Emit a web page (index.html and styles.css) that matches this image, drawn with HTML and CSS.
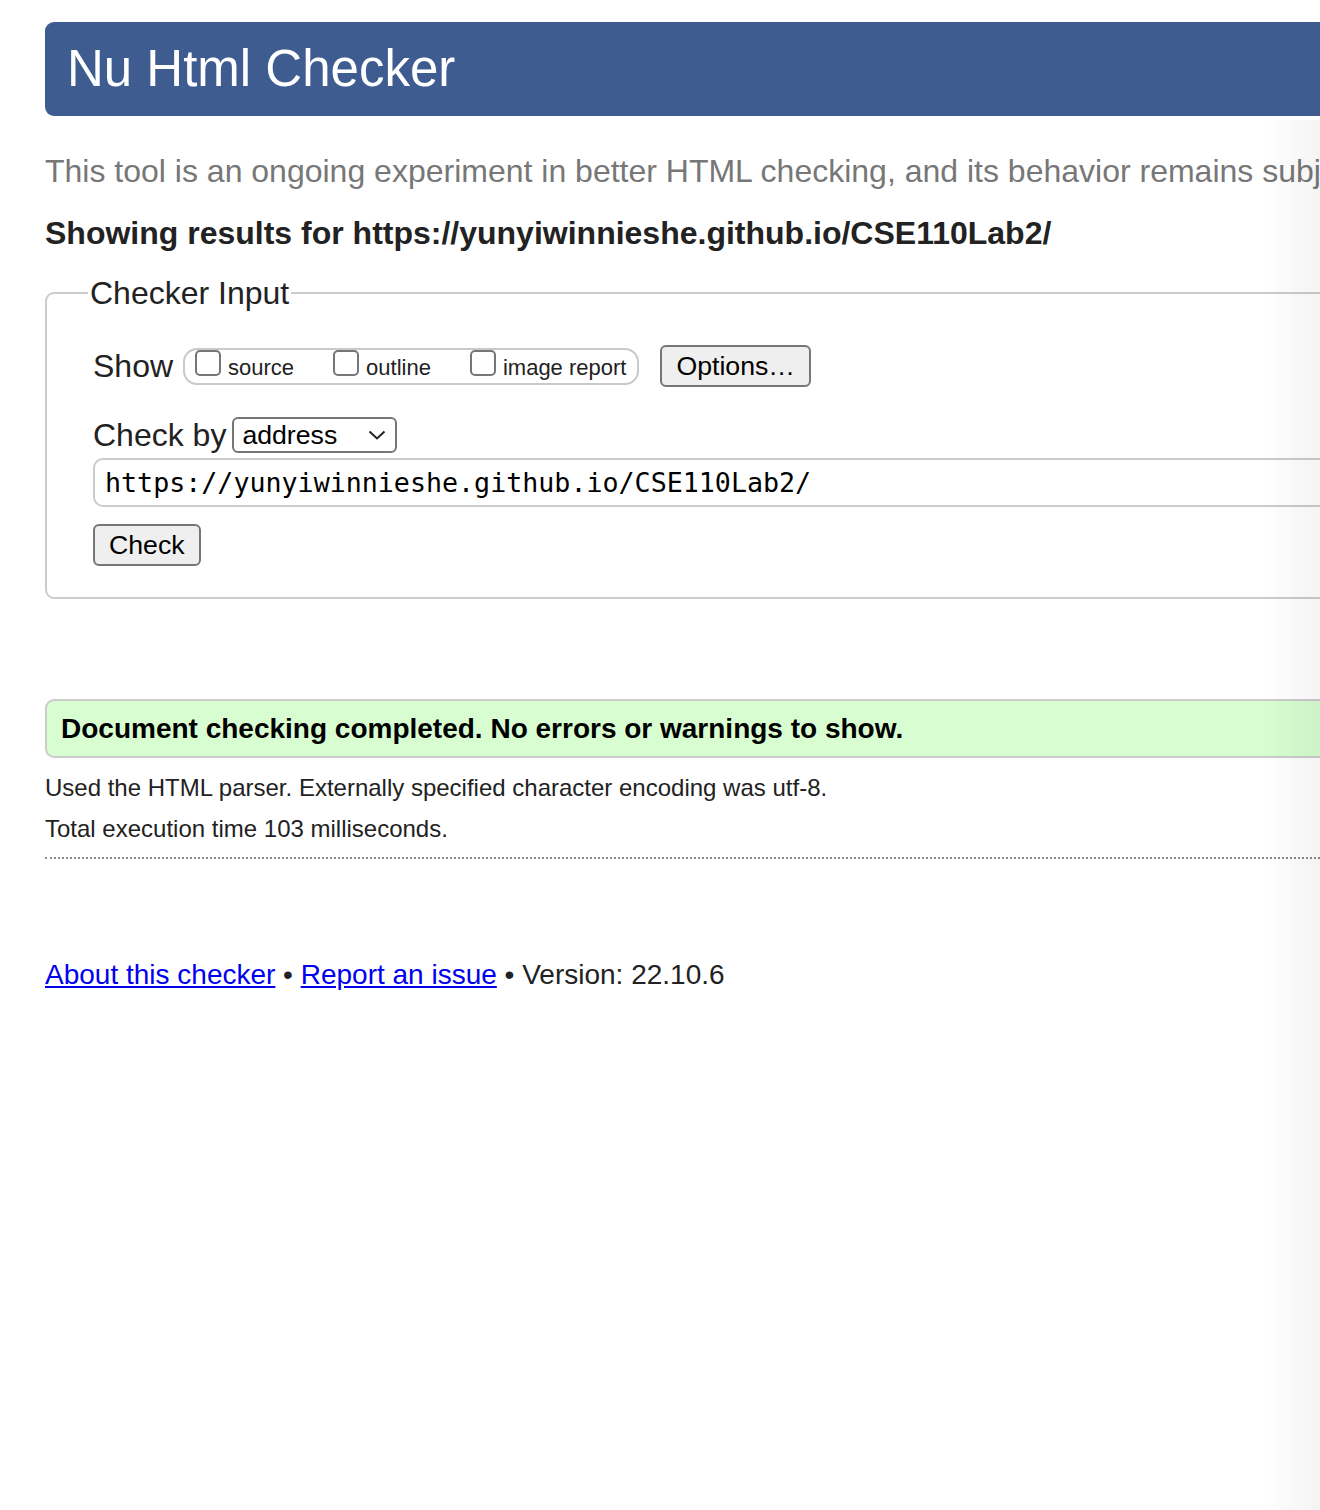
FILE: index.html
```html
<!DOCTYPE html>
<html lang="en">
<head>
<meta charset="utf-8">
<title>Nu Html Checker</title>
<link rel="stylesheet" href="styles.css">
</head>
<body>
<div class="page">
  <h1 class="title">Nu Html Checker</h1>
  <p class="intro">This tool is an ongoing experiment in better HTML checking, and its behavior remains subject to change</p>
  <p class="showing">Showing results for https://yunyiwinnieshe.github.io/CSE110Lab2/</p>
  <form class="checker">
    <fieldset class="checker-input">
      <legend>Checker Input</legend>
      <div class="fields">
        <div class="row show-row">
          <span class="row-label">Show</span>
          <span class="show-options">
            <label class="opt"><input type="checkbox"><span>source</span></label>
            <label class="opt"><input type="checkbox"><span>outline</span></label>
            <label class="opt"><input type="checkbox"><span>image report</span></label>
          </span>
          <button type="button" class="btn btn-options">Options…</button>
        </div>
        <div class="row by-row">
          <span class="row-label">Check by</span>
          <span class="select"><span>address</span><svg class="chev" width="18" height="10" viewBox="0 0 18 10"><path d="M1.5 1.5 L9 8.5 L16.5 1.5" fill="none" stroke="#222" stroke-width="2"/></svg></span>
        </div>
        <input class="url" type="text" value="https://yunyiwinnieshe.github.io/CSE110Lab2/">
        <button type="button" class="btn btn-check">Check</button>
      </div>
    </fieldset>
  </form>
  <p class="success">Document checking completed. No errors or warnings to show.</p>
  <p class="details first">Used the HTML parser. Externally specified character encoding was utf-8.</p>
  <p class="details">Total execution time 103 milliseconds.</p>
  <hr class="sep">
  <p class="footer"><a href="#">About this checker</a> • <a href="#">Report an issue</a> • Version: 22.10.6</p>
</div>
<div class="edge-shade"></div>
</body>
</html>
```

FILE: styles.css
```css
html, body {
  margin: 0;
  padding: 0;
  overflow: hidden;
  background: #fff;
}

body {
  font-family: "Liberation Sans", Arial, Helvetica, sans-serif;
  color: #222;
}

.page {
  width: 1760px;
  box-sizing: border-box;
  padding: 22px 0 0 45px;
}

.title {
  margin: 0;
  height: 94px;
  line-height: 94px;
  background: #3e5c8f;
  color: #fff;
  font-size: 51px;
  font-weight: normal;
  padding-left: 22px;
  border-radius: 9px 0 0 9px;
}

.intro {
  margin: 35px 0 0;
  font-size: 32px;
  line-height: 40px;
  color: #777;
  white-space: nowrap;
}

.showing {
  margin: 22px 0 0;
  font-size: 32px;
  line-height: 40px;
  font-weight: bold;
  color: #222;
}

.checker {
  margin: 20px 0 0;
}

.checker-input {
  margin: 0;
  min-width: 0;
  border: 2px solid #cccccc;
  border-radius: 9px 0 0 9px;
  padding: 0 0 31px 41px;
}

.checker-input legend {
  padding: 0 2px;
  font-size: 32px;
  line-height: 40px;
  color: #222;
}

.fields {
  padding-left: 5px;
}

.row {
  display: flex;
  align-items: center;
}

.row-label {
  font-size: 32px;
  line-height: 40px;
  color: #222;
}

.show-row {
  margin-top: 32px;
  height: 42px;
}

.show-options {
  display: inline-flex;
  align-items: flex-start;
  height: 37px;
  box-sizing: border-box;
  margin-left: 10px;
  padding: 0 11px 0 10px;
  border: 2px solid #c9c9c9;
  border-radius: 14px;
}

.opt {
  display: flex;
  align-items: flex-start;
  height: 33px;
  margin-right: 39px;
  font-size: 22px;
  line-height: 35px;
  color: #222;
}

.opt:last-child {
  margin-right: 0;
}

.opt input {
  -webkit-appearance: none;
  appearance: none;
  width: 26px;
  height: 26px;
  margin: 0 7px 0 0;
  box-sizing: border-box;
  border: 2px solid #767676;
  border-radius: 5px;
  background: #fff;
}

.btn {
  height: 42px;
  box-sizing: border-box;
  padding: 0 14px;
  font-family: "Liberation Sans", Arial, Helvetica, sans-serif;
  font-size: 26.67px;
  color: #000;
  background: #efefef;
  border: 2px solid #767676;
  border-radius: 6px;
}

.btn-options {
  margin-left: 21px;
}

.by-row {
  margin-top: 30px;
  height: 36px;
}

.select {
  display: flex;
  align-items: center;
  justify-content: space-between;
  width: 165px;
  height: 36px;
  box-sizing: border-box;
  margin-left: 6px;
  padding: 0 9px 0 8px;
  border: 2px solid #767676;
  border-radius: 6px;
  font-size: 26.67px;
  color: #000;
  background: #fff;
}

.chev {
  display: block;
}

.url {
  display: block;
  width: 1660px;
  height: 49px;
  box-sizing: border-box;
  margin: 5px 0 0;
  padding: 0 10px;
  border: 2px solid #cccccc;
  border-radius: 10px 0 0 10px;
  font-family: "DejaVu Sans Mono", "Liberation Mono", monospace;
  font-size: 26.67px;
  color: #000;
  background: #fff;
  outline: none;
}

.btn-check {
  display: block;
  margin-top: 17px;
}

.success {
  margin: 100px 0 0;
  height: 59px;
  box-sizing: border-box;
  padding-left: 14px;
  border: 2px solid #cccccc;
  border-radius: 9px 0 0 9px;
  background: #d7fdd1;
  font-size: 28px;
  line-height: 55px;
  font-weight: bold;
  color: #000;
}

.details {
  margin: 0;
  font-size: 24px;
  line-height: 41px;
  color: #222;
}

.details.first {
  margin-top: 9px;
}

.sep {
  margin: 8px 0 0;
  height: 0;
  border: 0;
  border-top: 2px dotted #8a8a8a;
}

.footer {
  margin: 96px 0 0;
  font-size: 28px;
  line-height: 40px;
  color: #222;
}

.footer a {
  color: #0000ee;
}

.edge-shade {
  position: fixed;
  top: 120px;
  right: 0;
  bottom: 0;
  width: 60px;
  pointer-events: none;
  background: linear-gradient(to right, rgba(0, 0, 0, 0), rgba(0, 0, 0, 0.045));
}
```
